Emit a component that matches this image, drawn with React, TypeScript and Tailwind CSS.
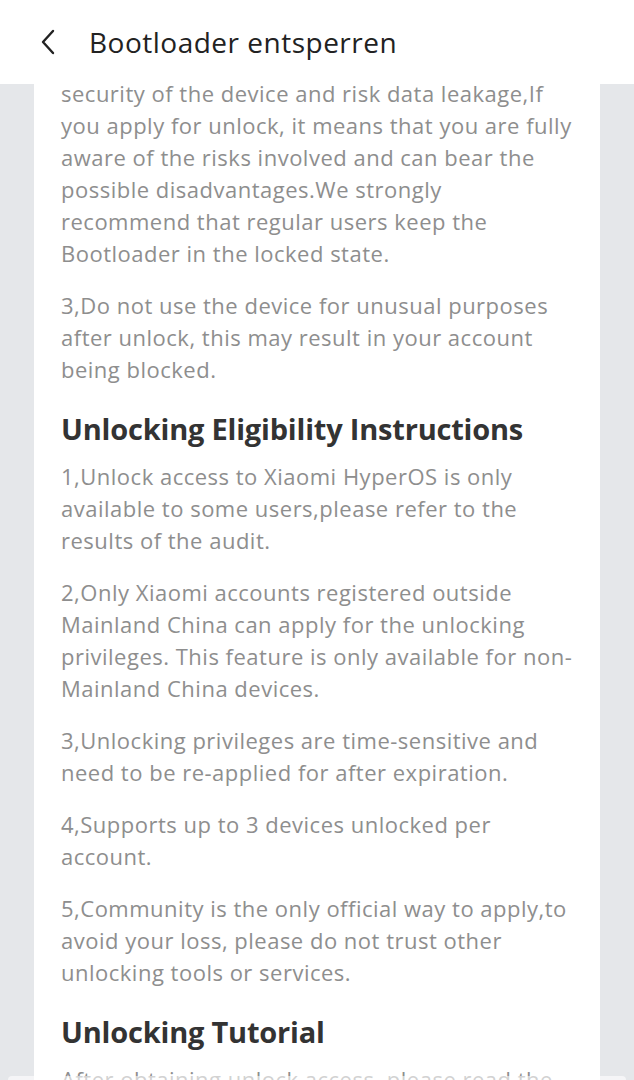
type Block = { kind: "p" | "h"; lines: string[] };

const blocks: Block[] = [
  {
    kind: "p",
    lines: [
      "security of the device and risk data leakage,If",
      "you apply for unlock, it means that you are fully",
      "aware of the risks involved and can bear the",
      "possible disadvantages.We strongly",
      "recommend that regular users keep the",
      "Bootloader in the locked state.",
    ],
  },
  {
    kind: "p",
    lines: [
      "3,Do not use the device for unusual purposes",
      "after unlock, this may result in your account",
      "being blocked.",
    ],
  },
  { kind: "h", lines: ["Unlocking Eligibility Instructions"] },
  {
    kind: "p",
    lines: [
      "1,Unlock access to Xiaomi HyperOS is only",
      "available to some users,please refer to the",
      "results of the audit.",
    ],
  },
  {
    kind: "p",
    lines: [
      "2,Only Xiaomi accounts registered outside",
      "Mainland China can apply for the unlocking",
      "privileges. This feature is only available for non-",
      "Mainland China devices.",
    ],
  },
  {
    kind: "p",
    lines: [
      "3,Unlocking privileges are time-sensitive and",
      "need to be re-applied for after expiration.",
    ],
  },
  {
    kind: "p",
    lines: ["4,Supports up to 3 devices unlocked per", "account."],
  },
  {
    kind: "p",
    lines: [
      "5,Community is the only official way to apply,to",
      "avoid your loss, please do not trust other",
      "unlocking tools or services.",
    ],
  },
  { kind: "h", lines: ["Unlocking Tutorial"] },
  {
    kind: "p",
    lines: [
      "After obtaining unlock access, please read the",
      "tutorial carefully before unlocking your device.",
    ],
  },
];

function Para({ lines }: { lines: string[] }) {
  return (
    <p className="text-[22px] leading-[32px] text-[#8e8e8e] mb-[20px] tracking-[0.5px]">
      {lines.map((l, i) => (
        <span key={i} className="block whitespace-nowrap">
          {l}
        </span>
      ))}
    </p>
  );
}

function Heading({ text }: { text: string }) {
  return (
    <h2 className="text-[29px] leading-[40px] font-bold text-[#333333] mt-[4px] mb-[11px] tracking-[-0.2px] whitespace-nowrap">
      {text}
    </h2>
  );
}

export default function App() {
  return (
    <div
      className="relative w-full h-[1080px] overflow-hidden bg-[#e5e7ea] flex flex-col"
      style={{ fontFamily: "'Open Sans', 'Noto Sans', sans-serif" }}
    >
      <header className="h-[84px] shrink-0 bg-white flex items-center">
        <svg className="ml-[38px] w-[20px] h-[28px]" viewBox="0 0 20 28" fill="none">
          <path d="M15 3 L5 14 L15 25" stroke="#222" strokeWidth="2.4" strokeLinecap="round" strokeLinejoin="round" />
        </svg>
        <h1 className="ml-[31px] text-[28px] text-[#222222] font-normal tracking-[0.5px]">Bootloader entsperren</h1>
      </header>

      <div className="flex-1 mx-[34px] bg-white px-[27px] overflow-hidden">
        <div className="-mt-[7px] flex flex-col">
          {blocks.map((b, i) =>
            b.kind === "h" ? <Heading key={i} text={b.lines[0]} /> : <Para key={i} lines={b.lines} />
          )}
        </div>
      </div>

      <div className="absolute left-[8px] right-[8px] bottom-0 h-[4px] rounded-t-[14px] bg-white/60" />
    </div>
  );
}
